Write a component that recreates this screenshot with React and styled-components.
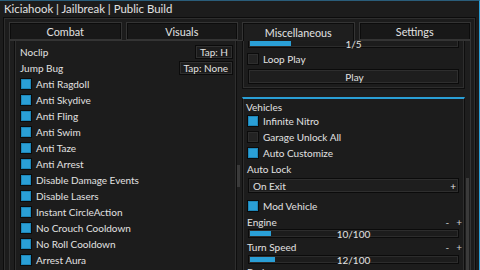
import React from 'react';
import styled, { createGlobalStyle } from 'styled-components';

const ACCENT = '#2a9fd6';
const TEXT = '#e2e2e2';
const FONT = '"Lato", "Noto Sans", sans-serif';
const FS = '10px';

const Global = createGlobalStyle`
  html, body { margin: 0; padding: 0; background: #1c1c1c; }
  body { width: 480px; height: 270px; overflow: hidden; font-family: ${FONT}; }
  * { box-sizing: border-box; }
`;

const Window = styled.div`
  width: 480px;
  height: 270px;
  background: #1c1c1c;
  border-top: 1px solid #2a5d7a;
  border-right: 1px solid ${ACCENT};
  display: flex;
  flex-direction: column;
  overflow: hidden;
`;

const Title = styled.div`
  height: 16px;
  padding-left: 4px;
  color: ${TEXT};
  font-size: 11.4px;
  line-height: 16px;
  white-space: nowrap;
`;

const Frame = styled.div`
  flex: 1;
  margin: 0 3px;
  border: 1px solid #0c0c0c;
  border-bottom: none;
  box-shadow: inset 1px 1px 0 #2e2e2e, inset -1px 0 0 #2e2e2e;
  background: #1c1c1c;
  padding: 4px 4px 0 5px;
  display: flex;
  flex-direction: column;
  min-height: 0;
`;

const TabRow = styled.div`
  display: flex;
  gap: 4px;
  height: 18px;
  position: relative;
  z-index: 1;
`;

const Tab = styled.div`
  flex: 1;
  height: ${p => (p.$active ? '19px' : '18px')};
  background: ${p => (p.$active ? '#1e1e1e' : '#181818')};
  border: 1px solid #343434;
  border-bottom: ${p => (p.$active ? 'none' : '1px solid #343434')};
  box-shadow: inset 1px 1px 0 #0c0c0c, inset -1px 0 0 #0c0c0c;
  color: ${TEXT};
  font-size: 10.8px;
  display: flex;
  align-items: center;
  justify-content: center;
  padding-top: 1px;
`;

const Content = styled.div`
  flex: 1;
  min-height: 0;
  background: #1e1e1e;
  border: 1px solid #343434;
  border-bottom: none;
  padding: 0 1px 0 4px;
  display: flex;
  gap: 2px;
`;

const Column = styled.div`
  width: ${p => p.$width || 'auto'};
  flex: ${p => (p.$width ? '0 0 auto' : '1')};
  display: flex;
  gap: ${p => p.$gap || 0}px;
  min-height: 0;
  overflow: hidden;
`;

const Stack = styled.div`
  flex: 1;
  display: flex;
  flex-direction: column;
  gap: 8px;
  margin-top: ${p => p.$offset || 0}px;
`;

const Track = styled.div`
  width: 3px;
  position: relative;
`;

const Thumb = styled.div`
  position: absolute;
  left: 0;
  width: 3px;
  background: #3a3a3a;
`;

const Group = styled.div`
  background: #1c1c1c;
  border: 1px solid #0e0e0e;
  border-top: ${p => (p.$continued ? 'none' : p.$accent ? `2px solid ${ACCENT}` : '1px solid #0e0e0e')};
  box-shadow: inset 1px 0 0 #2e2e2e, inset -1px 0 0 #2e2e2e, inset 0 -1px 0 #2e2e2e;
  padding: ${p => (p.$continued ? '3px' : '0')} ${p => p.$padR}px 4px ${p => p.$pad}px;
  display: flex;
  flex-direction: column;
`;

const GroupTitle = styled.div`
  height: 14px;
  padding-top: 2px;
  display: flex;
  align-items: center;
  color: ${TEXT};
  font-size: ${FS};
  margin-left: -1px;
`;

const Row = styled.div`
  height: ${p => p.$h || 16}px;
  display: flex;
  align-items: center;
  gap: 4px;
  color: ${TEXT};
  font-size: ${FS};
  white-space: nowrap;
  margin-top: ${p => p.$mt || 0}px;
`;

const Label = styled.span`
  line-height: 1;
`;

const Box = styled.div`
  width: 12px;
  height: 12px;
  flex: 0 0 auto;
  border: 1px solid #0b0b0b;
  background: ${p => (p.$on ? ACCENT : '#232323')};
  box-shadow: inset 0 0 0 1px ${p => (p.$on ? '#1d86b8' : '#2e2e2e')};
`;

const KeyBind = styled.div`
  margin-left: auto;
  height: 14px;
  padding: 0 4px;
  border: 1px solid #0b0b0b;
  box-shadow: inset 0 0 0 1px #2f2f2f;
  background: #1c1c1c;
  color: ${TEXT};
  font-size: ${FS};
  display: flex;
  align-items: center;
`;

const Adjust = styled.div`
  margin-left: auto;
  margin-right: -2px;
  display: flex;
  gap: 7px;
  font-size: 10px;
  color: #cfcfcf;
`;

const Slider = styled.div`
  height: 9px;
  margin: ${p => p.$m || '0'};
  border: 1px solid #0b0b0b;
  box-shadow: inset 0 0 0 1px #2c2c2c;
  background: #1c1c1c;
  padding: 1px;
  position: relative;
  margin-left: 1px;
  margin-right: 1px;
`;

const Fill = styled.div`
  height: 100%;
  background: ${ACCENT};
`;

const SliderText = styled.div`
  position: absolute;
  inset: 0;
  display: flex;
  align-items: center;
  justify-content: center;
  color: ${TEXT};
  font-size: ${FS};
  line-height: 1;
`;

const Button = styled.div`
  height: 15px;
  margin: ${p => p.$m || '0'} 1px 0 1px;
  border: 1px solid #0b0b0b;
  box-shadow: inset 0 0 0 1px #2e2e2e;
  background: #1e1e1e;
  color: ${TEXT};
  font-size: ${FS};
  display: flex;
  align-items: center;
  justify-content: ${p => (p.$between ? 'space-between' : 'center')};
  padding: 0 2px 0 4px;
`;

const Check = ({ on, children }) => (
  <Row>
    <Box $on={on} />
    <Label>{children}</Label>
  </Row>
);

const SliderBar = ({ value, max, m }) => (
  <Slider $m={m}>
    <Fill style={{ width: `${(value / max) * 100}%` }} />
    <SliderText>{value}/{max}</SliderText>
  </Slider>
);

const leftChecks = [
  'Anti Ragdoll', 'Anti Skydive', 'Anti Fling', 'Anti Swim', 'Anti Taze', 'Anti Arrest',
  'Disable Damage Events', 'Disable Lasers', 'Instant CircleAction', 'No Crouch Cooldown',
  'No Roll Cooldown', 'Arrest Aura',
];

export default function App() {
  return (
    <>
      <Global />
      <Window>
        <Title>Kiciahook | Jailbreak | Public Build</Title>
        <Frame>
          <TabRow>
            <Tab>Combat</Tab>
            <Tab>Visuals</Tab>
            <Tab $active>Miscellaneous</Tab>
            <Tab>Settings</Tab>
          </TabRow>
          <Content>
            <Column $width="226px">
              <Stack>
                <Group $continued $pad={5} $padR={3}>
                  <Row>
                    <Label>Noclip</Label>
                    <KeyBind>Tap: H</KeyBind>
                  </Row>
                  <Row>
                    <Label>Jump Bug</Label>
                    <KeyBind>Tap: None</KeyBind>
                  </Row>
                  {leftChecks.map(t => (
                    <Check key={t} on>{t}</Check>
                  ))}
                </Group>
              </Stack>
              <Track>
                <Thumb style={{ top: 124, height: 22 }} />
              </Track>
            </Column>
            <Column $gap={1}>
              <Stack $offset={-1}>
                <Group $continued $pad={4} $padR={4}>
                  <SliderBar value={1} max={5} m="-4px 0 0 0" />
                  <Row $mt={3}>
                    <Box />
                    <Label>Loop Play</Label>
                  </Row>
                  <Button $m="2px">Play</Button>
                </Group>
                <Group $accent $pad={4} $padR={4}>
                  <GroupTitle>Vehicles</GroupTitle>
                  <Check on>Infinite Nitro</Check>
                  <Check>Garage Unlock All</Check>
                  <Check on>Auto Customize</Check>
                  <Row $h={15}><Label>Auto Lock</Label></Row>
                  <Button $m="2px" $between>
                    <span>On Exit</span>
                    <span>+</span>
                  </Button>
                  <Row $mt={5}>
                    <Box $on />
                    <Label>Mod Vehicle</Label>
                  </Row>
                  <Row $h={15}>
                    <Label>Engine</Label>
                    <Adjust><span>-</span><span>+</span></Adjust>
                  </Row>
                  <SliderBar value={10} max={100} />
                  <Row $h={16} $mt={1}>
                    <Label>Turn Speed</Label>
                    <Adjust><span>-</span><span>+</span></Adjust>
                  </Row>
                  <SliderBar value={12} max={100} />
                  <Row $h={15}>
                    <Label>Brakes</Label>
                    <Adjust><span>-</span><span>+</span></Adjust>
                  </Row>
                </Group>
              </Stack>
              <Track>
                <Thumb style={{ top: 137, height: 100 }} />
              </Track>
            </Column>
          </Content>
        </Frame>
      </Window>
    </>
  );
}
